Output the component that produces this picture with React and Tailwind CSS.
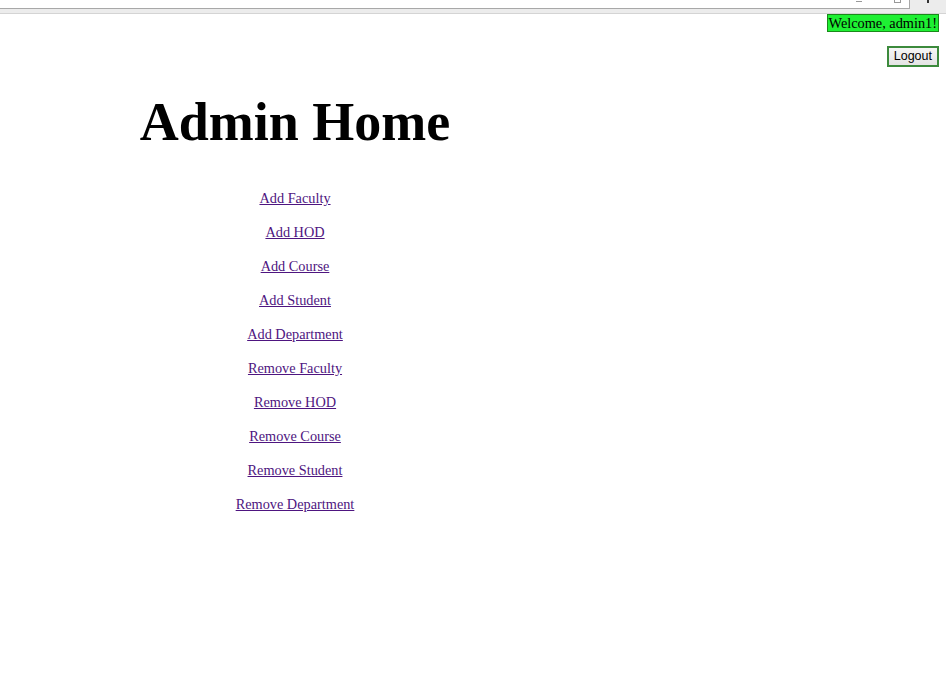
import React from "react";

const links = [
  "Add Faculty",
  "Add HOD",
  "Add Course",
  "Add Student",
  "Add Department",
  "Remove Faculty",
  "Remove HOD",
  "Remove Course",
  "Remove Student",
  "Remove Department",
];

export default function App() {
  return (
    <div className="min-h-[692px] bg-white font-['Liberation_Serif',serif] text-black">
      {/* browser bar remnant */}
      <div className="flex h-[14px] border-b border-[#d4d4d4] bg-[#ececec]">
        <div className="flex h-[9px] flex-1 items-start justify-end gap-[32px] border-b border-r border-[#a8a8a8] bg-white pr-[8px]">
          <div className="h-[2px] w-[6px] border-b border-[#999]" />
          <div className="h-[3px] w-[7px] border-x border-b border-[#999]" />
        </div>
        <div className="flex w-[36px] justify-center">
          <div className="h-[3px] w-[2px] bg-[#333]" />
        </div>
      </div>

      <div className="flex flex-col items-end pr-[7px]">
        <span className="border border-[#1a8a1a] bg-[#1ef033] px-[1px] text-[14.3px] leading-[16px]">
          Welcome, admin1!
        </span>
        <button className="mt-[14px] border-2 border-[#3c8a3c] bg-gradient-to-b from-[#f6f6f6] to-[#e4e4e4] px-[5px] py-[1px] font-['Liberation_Sans',sans-serif] text-[12.5px] leading-[15px]">
          Logout
        </button>
      </div>

      <div className="w-[590px] text-center">
        <h1 className="mt-[23px] text-[54px] font-bold leading-[64px]">Admin Home</h1>
        <ul className="mt-[36px] flex flex-col items-center gap-[17px]">
          {links.map((l) => (
            <li key={l} className="text-[14.3px] leading-[17px]">
              <a href="#" className="text-[#4e1580] underline">
                {l}
              </a>
            </li>
          ))}
        </ul>
      </div>
    </div>
  );
}
